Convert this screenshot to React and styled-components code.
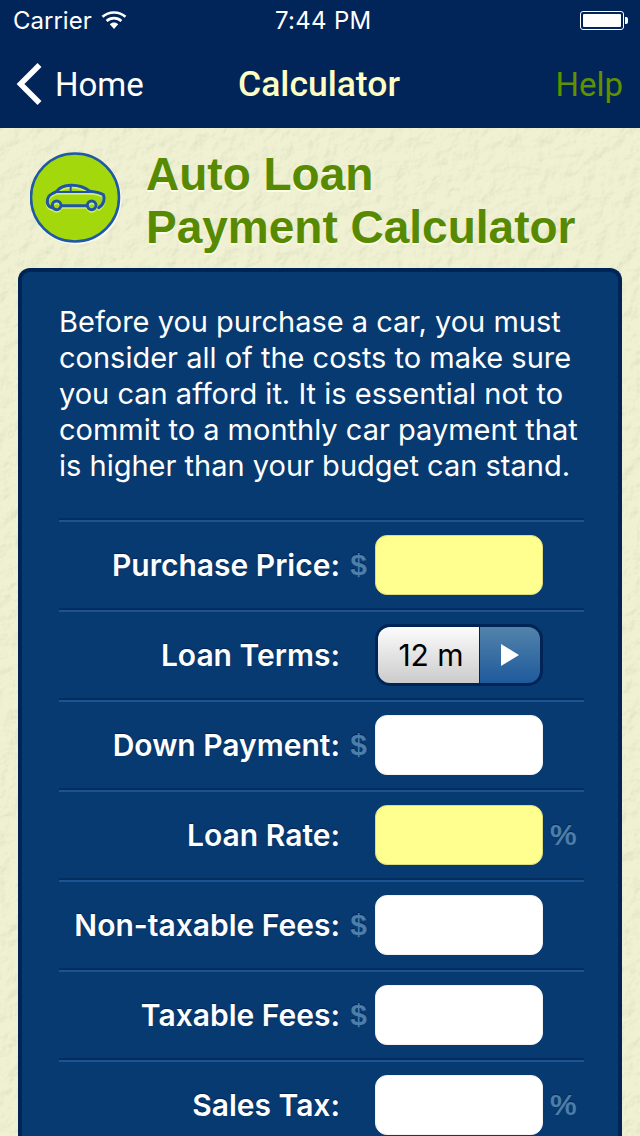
import React from 'react';
import styled, { createGlobalStyle } from 'styled-components';

const paper = `url("data:image/svg+xml;utf8,<svg xmlns='http://www.w3.org/2000/svg' width='640' height='1136'><filter id='p' x='0' y='0' width='100%' height='100%'><feTurbulence type='fractalNoise' baseFrequency='0.07' numOctaves='5' seed='7'/><feDiffuseLighting lighting-color='white' surfaceScale='0.85' diffuseConstant='1.12'><feDistantLight azimuth='45' elevation='62'/></feDiffuseLighting></filter><rect width='640' height='1136' fill='white' filter='url(%23p)'/></svg>")`;

const GlobalStyle = createGlobalStyle`
  html, body {
    margin: 0;
    padding: 0;
    height: 1136px;
    overflow: hidden;
    background: #f0f0d6;
  }
`;

const Screen = styled.div`
  width: 640px;
  height: 1136px;
  overflow: hidden;
  display: flex;
  flex-direction: column;
  font-family: "Inter", "Liberation Sans", sans-serif;
  background-color: #eff1d2;
  background-image: ${paper};
  background-blend-mode: multiply;
`;

const Header = styled.header`
  height: 128px;
  flex: none;
  background: #012558;
  color: #fff;
`;

const StatusBar = styled.div`
  height: 40px;
  display: grid;
  grid-template-columns: 262px auto 1fr;
  align-items: center;
  padding: 0 16px 0 13px;
  font-size: 24px;
`;

const Carrier = styled.div`
  display: flex;
  align-items: center;
  gap: 9px;
`;

const Clock = styled.div`
  letter-spacing: 0.3px;
`;

const Battery = styled.div`
  justify-self: end;
  width: 44px;
  height: 19px;
  border: 1px solid #fff;
  border-radius: 3px;
  padding: 2px;
  box-sizing: border-box;
  position: relative;
  span {
    display: block;
    height: 100%;
    background: #fff;
    border-radius: 1px;
  }
  &::after {
    content: '';
    position: absolute;
    right: -5px;
    top: 5px;
    width: 3px;
    height: 7px;
    background: #fff;
    border-radius: 0 2px 2px 0;
  }
`;

const NavBar = styled.nav`
  height: 88px;
  display: grid;
  grid-template-columns: 1fr auto 1fr;
  align-items: center;
  padding: 0 17px 2px 15px;
  font-size: 33px;
  font-family: "Roboto", "Liberation Sans", sans-serif;
`;

const BackLink = styled.div`
  display: flex;
  align-items: center;
  gap: 13px;
`;

const NavTitle = styled.div`
  color: #ffffc4;
  font-weight: 500;
  font-size: 35.5px;
`;

const HelpLink = styled.div`
  justify-self: end;
  color: #5f9100;
`;

const TitleRow = styled.div`
  height: 140px;
  flex: none;
  display: flex;
  align-items: flex-start;
  gap: 24px;
  padding: 20px 0 0 30px;
  box-sizing: border-box;
`;

const BadgeWrap = styled.div`
  padding-top: 4px;
  line-height: 0;
`;

const Title = styled.h1`
  margin: 0;
  font: bold 46px/53px "Liberation Sans", sans-serif;
  color: #578a00;
  text-shadow: 0 1.5px 0 #fbfbea;
`;

const Panel = styled.section`
  margin: 0 18px;
  flex: 1;
  box-sizing: border-box;
  background: #073a70;
  border: 4px solid #012456;
  border-bottom: 0;
  border-radius: 12px 12px 0 0;
  padding: 32px 34px 0 37px;
`;

const Intro = styled.p`
  margin: 0 0 36px;
  color: #fff;
  font-size: 29px;
  line-height: 36px;
  white-space: nowrap;
`;

const Row = styled.div`
  height: 90px;
  box-sizing: border-box;
  border-top: 2px solid #1c5391;
  box-shadow: 0 -2px 0 #042c5c;
  padding-bottom: 2px;
  display: grid;
  grid-template-columns: 281px 35px 168px auto;
  align-items: center;
`;

const Label = styled.label`
  color: #fff;
  font-size: 30px;
  font-weight: 600;
  text-align: right;
  white-space: nowrap;
  text-shadow: 0 -1px 1px #012456;
`;

const Unit = styled.span`
  color: #4d7da9;
  font-size: 30px;
  font-weight: 700;
  text-align: ${p => (p.$after ? 'left' : 'center')};
  padding-left: ${p => (p.$after ? '7px' : '2px')};
  text-shadow: 0 -1px 0 #012456;
  font-family: "Liberation Sans", sans-serif;
`;

const Field = styled.div`
  height: 60px;
  box-sizing: border-box;
  border-radius: 12px;
  background: ${p => (p.$required ? '#ffff90' : '#fff')};
  border: 1px solid ${p => (p.$required ? '#dcdc7c' : '#f2f2f2')};
`;

const Picker = styled.div`
  height: 62px;
  box-sizing: border-box;
  display: grid;
  grid-template-columns: 101px 1fr;
  border: 3px solid #012456;
  border-radius: 15px;
  background: #012456;
  overflow: hidden;
`;

const PickerValue = styled.div`
  display: flex;
  align-items: center;
  justify-content: center;
  font-size: 30px;
  color: #000;
  padding-left: 5px;
  background: linear-gradient(#fcfcfc, #cbcbcb);
`;

const PickerButton = styled.div`
  margin-left: 1px;
  display: flex;
  align-items: center;
  justify-content: center;
  background: linear-gradient(#5383ab, #1e5a9c);
`;

const fields = [
  { label: 'Purchase Price:', before: '$', required: true },
  { label: 'Loan Terms:', picker: '12 m' },
  { label: 'Down Payment:', before: '$' },
  { label: 'Loan Rate:', after: '%', required: true },
  { label: 'Non-taxable Fees:', before: '$' },
  { label: 'Taxable Fees:', before: '$' },
  { label: 'Sales Tax:', after: '%' },
];

function WifiIcon() {
  return (
    <svg width="26" height="20" viewBox="0 0 26 20">
      <g fill="none" stroke="#fff" strokeWidth="2.6">
        <path d="M1.500 6.800C7.800 1 18.200 1 24.500 6.800" />
        <path d="M5.600 11C9.800 7.200 16.200 7.200 20.400 11" />
      </g>
      <path d="M8.800 14.200C11.200 12 14.800 12 17.200 14.200L13 19Z" fill="#fff" />
    </svg>
  );
}

function BackIcon() {
  return (
    <svg width="27" height="44" viewBox="0 0 27 44">
      <path d="M24.500 3L5.500 22L24.500 41" fill="none" stroke="#fff" strokeWidth="5.500" />
    </svg>
  );
}

const carOutline = 'M35 95C27 92 22 86 22 78C22 68 26 58 35 54L50 46C58 36 70 29 92 28C118 27 134 34 150 46C168 48 182 51 190 56C194 66 194 84 176 95M140 89H64';

function CarShape({ color, width }) {
  return (
    <g fill="none" stroke={color} strokeLinejoin="round" strokeLinecap="round">
      <path d={carOutline} strokeWidth={width} />
      <path d="M50 48H150M92 29V48" strokeWidth={width - 3} />
      <circle cx="50" cy="88" r="13" strokeWidth={width} />
      <circle cx="155" cy="88" r="13" strokeWidth={width} />
    </g>
  );
}

function CarBadge() {
  return (
    <svg width="92" height="93" viewBox="0 0 92 93">
      <circle cx="46" cy="47" r="45.500" fill="#fff" opacity="0.8" />
      <circle cx="45" cy="45.500" r="44" fill="#a3d90c" stroke="#1f59a3" strokeWidth="2.600" />
      <g transform="translate(10 24) scale(0.3333)">
        <g transform="translate(0 5)"><CarShape color="#d4ec70" width={9} /></g>
        <CarShape color="#1f55a3" width={9} />
      </g>
    </svg>
  );
}

function PlayIcon() {
  return (
    <svg width="20" height="24" viewBox="0 0 20 24">
      <path d="M1 1L19 12L1 23Z" fill="#fff" />
    </svg>
  );
}

function FormRow({ label, before, after, required, picker }) {
  return (
    <Row>
      <Label>{label}</Label>
      <Unit>{before}</Unit>
      {picker ? (
        <Picker>
          <PickerValue>{picker}</PickerValue>
          <PickerButton><PlayIcon /></PickerButton>
        </Picker>
      ) : (
        <Field $required={required} />
      )}
      {after && <Unit $after>{after}</Unit>}
    </Row>
  );
}

export default function App() {
  return (
    <Screen>
      <GlobalStyle />
      <Header>
        <StatusBar>
          <Carrier>Carrier <WifiIcon /></Carrier>
          <Clock>7:44 PM</Clock>
          <Battery><span /></Battery>
        </StatusBar>
        <NavBar>
          <BackLink><BackIcon /> Home</BackLink>
          <NavTitle>Calculator</NavTitle>
          <HelpLink>Help</HelpLink>
        </NavBar>
      </Header>
      <TitleRow>
        <BadgeWrap><CarBadge /></BadgeWrap>
        <Title>Auto Loan<br />Payment Calculator</Title>
      </TitleRow>
      <Panel>
        <Intro>
          Before you purchase a car, you must<br />
          consider all of the costs to make sure<br />
          you can afford it. It is essential not to<br />
          commit to a monthly car payment that<br />
          is higher than your budget can stand.
        </Intro>
        {fields.map(f => <FormRow key={f.label} {...f} />)}
      </Panel>
    </Screen>
  );
}
